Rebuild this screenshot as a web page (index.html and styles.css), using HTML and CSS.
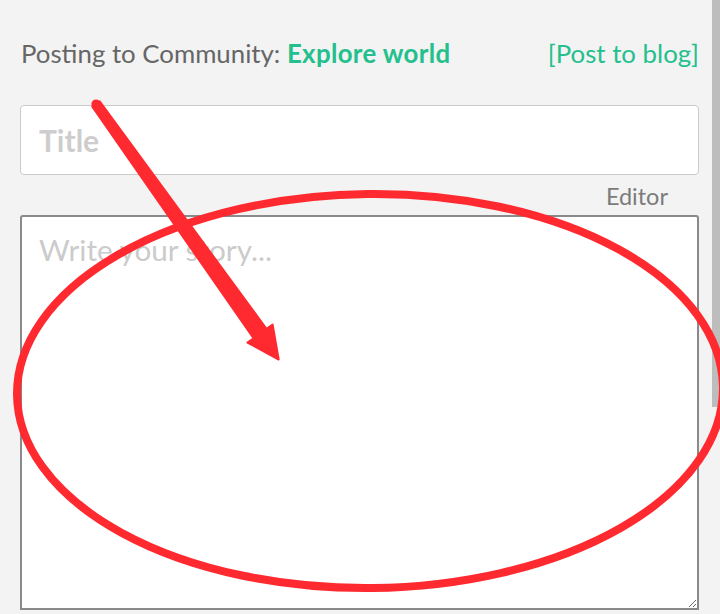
FILE: index.html
```html
<!DOCTYPE html>
<html lang="en">

<head>
    <meta charset="UTF-8">
    <meta name="viewport" content="width=device-width, initial-scale=1.0">
    <title>New Post</title>
    <link rel="stylesheet" href="styles.css">
</head>

<body>
    <div class="screen">
        <div class="page">
            <div class="composer">
                <div class="post-target">
                    <span class="target-label">Posting to Community: <b class="community">Explore world</b></span>
                    <a class="switch-link" href="#">[Post to blog]</a>
                </div>

                <input class="title-input" type="text" placeholder="Title">

                <div class="editor-label">Editor</div>
                <textarea class="story-input" placeholder="Write your story..."></textarea>
            </div>

            <!-- thin scrollbar of the post panel -->
            <div class="scroll-rail">
                <div class="scroll-thumb"></div>
            </div>
        </div>

        <!-- red markup drawn on top of the form -->
        <svg class="markup" width="720" height="614" viewBox="0 0 720 614">
            <ellipse cx="370" cy="391" rx="353" ry="197" transform="rotate(-0.6 370 391)"
                fill="none" stroke="#ff2a30" stroke-width="8" />
            <polygon points="99.7,101.4 266.5,328.8 272.6,324.5 278.7,359.5 247.4,342.5 253.5,338.2 92.3,106.6"
                fill="#ff2a30" stroke="#ff2a30" stroke-width="2" stroke-linejoin="round" />
            <circle cx="96" cy="104" r="4.6" fill="#ff2a30" />
        </svg>
    </div>
</body>

</html>
```

FILE: styles.css
```css
body {
    margin: 0;
    background-color: #f3f3f3;
    font-family: Lato, "Open Sans", sans-serif;
}

.screen {
    position: relative;
    width: 720px;
    height: 614px;
    overflow: hidden;
}

.page {
    display: flex;
    height: 100%;
}

.composer {
    flex: 1;
    display: flex;
    flex-direction: column;
    padding: 37px 13px 0 20px;
}

.scroll-rail {
    width: 8px;
}

.scroll-thumb {
    height: 407px;
    background-color: #bdbdbd;
}

.post-target {
    display: flex;
    justify-content: space-between;
    align-items: baseline;
    padding-left: 1px;
    font-size: 25.8px;
    line-height: 32px;
    color: #666;
}

.community {
    color: #23c08d;
    letter-spacing: 0.35px;
}

.switch-link {
    color: #23c08d;
    text-decoration: none;
}

.title-input {
    box-sizing: border-box;
    flex-shrink: 0;
    height: 70px;
    margin-top: 36px;
    padding: 0 18px;
    border: 1px solid #cbcbcb;
    border-radius: 4px;
    background: #fff;
    font-family: inherit;
    font-size: 30px;
    font-weight: bold;
    color: #444;
    outline: none;
}

.title-input::placeholder {
    color: #cdcdcd;
}

.editor-label {
    align-self: flex-end;
    margin-top: 6px;
    margin-right: 31px;
    font-size: 23.5px;
    line-height: 30px;
    color: #7b7b7b;
}

.story-input {
    box-sizing: border-box;
    flex-shrink: 0;
    height: 395px;
    margin: 4px 0 0;
    padding: 15px 17px;
    border: 2px solid #8a8a8a;
    border-radius: 3px 3px 0 0;
    background: #fff;
    font-family: inherit;
    font-size: 29.7px;
    line-height: 36px;
    color: #444;
    outline: none;
}

.story-input::placeholder {
    color: #cbcbcb;
}

.markup {
    position: absolute;
    top: 0;
    left: 0;
    pointer-events: none;
}
```
